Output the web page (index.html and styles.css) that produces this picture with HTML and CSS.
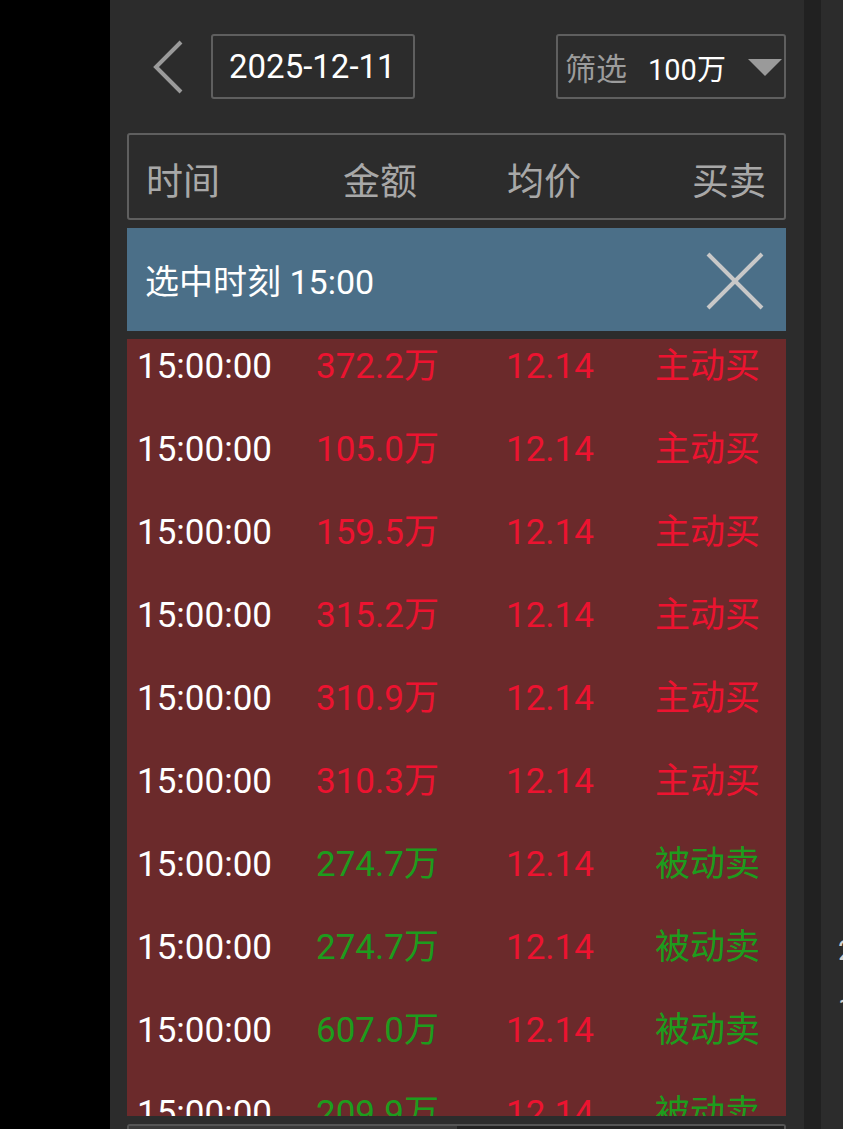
FILE: index.html
```html
<!DOCTYPE html>
<html lang="zh-CN">
<head>
    <meta charset="UTF-8">
    <meta name="viewport" content="width=device-width, initial-scale=1.0">
    <title>成交明细</title>
    <link rel="stylesheet" href="styles.css">
</head>
<body>
<div class="screen">
    <div class="side-black"></div>

    <div class="panel">
        <!-- top bar: back, date, filter -->
        <div class="top-bar">
            <svg class="back" width="32" height="54" viewBox="0 0 32 54">
                <polyline points="29,2 4,27 29,52" fill="none" stroke="#9a9a9a" stroke-width="4"/>
            </svg>
            <div class="date-box">2025-12-11</div>
            <div class="filter-box">
                <span class="filter-label">筛选</span>
                <span class="filter-value">100万</span>
                <svg class="caret" width="34" height="18" viewBox="0 0 34 18">
                    <polygon points="0,0 34,0 17,17" fill="#9a9a9a"/>
                </svg>
            </div>
        </div>

        <div class="head-row">
            <span class="h-time">时间</span>
            <span class="h-amount">金额</span>
            <span class="h-price">均价</span>
            <span class="h-side">买卖</span>
        </div>

        <div class="selected-bar">
            <span>选中时刻 15:00</span>
            <svg class="close" width="58" height="58" viewBox="0 0 58 58">
                <line x1="2" y1="2" x2="56" y2="56" stroke="#c8c8c8" stroke-width="4"/>
                <line x1="56" y1="2" x2="2" y2="56" stroke="#c8c8c8" stroke-width="4"/>
            </svg>
        </div>

        <div class="ticks">
            <div class="tick"><span class="t">15:00:00</span><span class="up">372.2万</span><span class="up">12.14</span><span class="up">主动买</span></div>
            <div class="tick"><span class="t">15:00:00</span><span class="up">105.0万</span><span class="up">12.14</span><span class="up">主动买</span></div>
            <div class="tick"><span class="t">15:00:00</span><span class="up">159.5万</span><span class="up">12.14</span><span class="up">主动买</span></div>
            <div class="tick"><span class="t">15:00:00</span><span class="up">315.2万</span><span class="up">12.14</span><span class="up">主动买</span></div>
            <div class="tick"><span class="t">15:00:00</span><span class="up">310.9万</span><span class="up">12.14</span><span class="up">主动买</span></div>
            <div class="tick"><span class="t">15:00:00</span><span class="up">310.3万</span><span class="up">12.14</span><span class="up">主动买</span></div>
            <div class="tick"><span class="t">15:00:00</span><span class="down">274.7万</span><span class="up">12.14</span><span class="down">被动卖</span></div>
            <div class="tick"><span class="t">15:00:00</span><span class="down">274.7万</span><span class="up">12.14</span><span class="down">被动卖</span></div>
            <div class="tick"><span class="t">15:00:00</span><span class="down">607.0万</span><span class="up">12.14</span><span class="down">被动卖</span></div>
            <div class="tick"><span class="t">15:00:00</span><span class="down">209.9万</span><span class="up">12.14</span><span class="down">被动卖</span></div>
        </div>

        <div class="bottom-tabs">
            <div class="tab-on"></div>
            <div class="tab-off"></div>
        </div>
    </div>

    <div class="divider"></div>

    <div class="next-panel">
        <div class="peek">2</div>
        <div class="peek">1</div>
    </div>
</div>
</body>
</html>
```

FILE: styles.css
```css
/* Page */
body {
    margin: 0;
    background-color: #000;
    font-family: Roboto, "Noto Sans CJK SC", sans-serif;
    overflow: hidden;
}

.screen {
    display: flex;
    height: 1129px;
}

.side-black {
    width: 110px;
    background-color: #000;
}

/* Main panel */
.panel {
    width: 659px;
    padding: 34px 18px 0 17px;
    background-color: #2c2c2c;
    display: flex;
    flex-direction: column;
    overflow: hidden;
}

.panel > * {
    flex-shrink: 0;
}

.top-bar {
    display: flex;
    align-items: center;
    height: 65px;
}

.back {
    margin-left: 25px;
    margin-right: 27px;
}

.date-box {
    box-sizing: border-box;
    width: 204px;
    height: 65px;
    border: 2px solid #5f5f5f;
    border-radius: 3px;
    padding-left: 16px;
    display: flex;
    align-items: center;
    color: #fff;
    font-size: 33px;
}

.filter-box {
    box-sizing: border-box;
    margin-left: auto;
    width: 230px;
    height: 65px;
    border: 2px solid #5f5f5f;
    border-radius: 3px;
    padding-left: 7px;
    display: flex;
    align-items: center;
}

.filter-label {
    color: #9c9c9c;
    font-size: 31px;
}

.filter-value {
    color: #fff;
    font-size: 29px;
    margin-left: 21px;
}

.caret {
    margin-left: 22px;
    margin-top: 2px;
}

/* Column header */
.head-row {
    box-sizing: border-box;
    margin-top: 34px;
    height: 87px;
    border: 2px solid #5f5f5f;
    border-radius: 3px;
    padding-left: 17px;
    padding-top: 4px;
    display: flex;
    align-items: center;
    color: #a8a8a8;
    font-size: 37px;
}

.h-time { width: 197px; }
.h-amount { width: 164px; }
.h-price { width: 185px; }

/* Selected time bar */
.selected-bar {
    margin-top: 8px;
    height: 103px;
    background-color: #4b6f88;
    display: flex;
    align-items: center;
    justify-content: space-between;
    padding: 0 22px 0 18px;
    color: #fff;
    font-size: 34px;
}

.close {
    margin-top: 2px;
}

/* Tick list */
.ticks {
    margin-top: 8px;
    height: 777px;
    background-color: #6b2a2b;
    overflow: hidden;
}

.tick {
    height: 83px;
    line-height: 56px;
    padding-left: 10px;
    display: grid;
    grid-template-columns: 179px 190px 149px auto;
    font-size: 35px;
    white-space: nowrap;
}

.tick .t { color: #fff; }
.tick .up { color: #ec1330; }
.tick .down { color: #1d9c1d; }

/* Bottom tabs (cut off) */
.bottom-tabs {
    margin-top: 8px;
    height: 40px;
    border: 2px solid #555;
    border-bottom: none;
    border-radius: 3px 3px 0 0;
    display: flex;
}

.tab-on {
    width: 328px;
    background-color: #3a3a3a;
}

.tab-off {
    flex: 1;
    background-color: #232323;
}

/* Right edge */
.divider {
    width: 17px;
    background-color: #212121;
}

.next-panel {
    flex: 1;
    background-color: #2c2c2c;
    padding: 922px 0 0 17px;
    overflow: hidden;
}

.peek {
    color: #cfcfcf;
    font-size: 28px;
    line-height: 58px;
}
```
